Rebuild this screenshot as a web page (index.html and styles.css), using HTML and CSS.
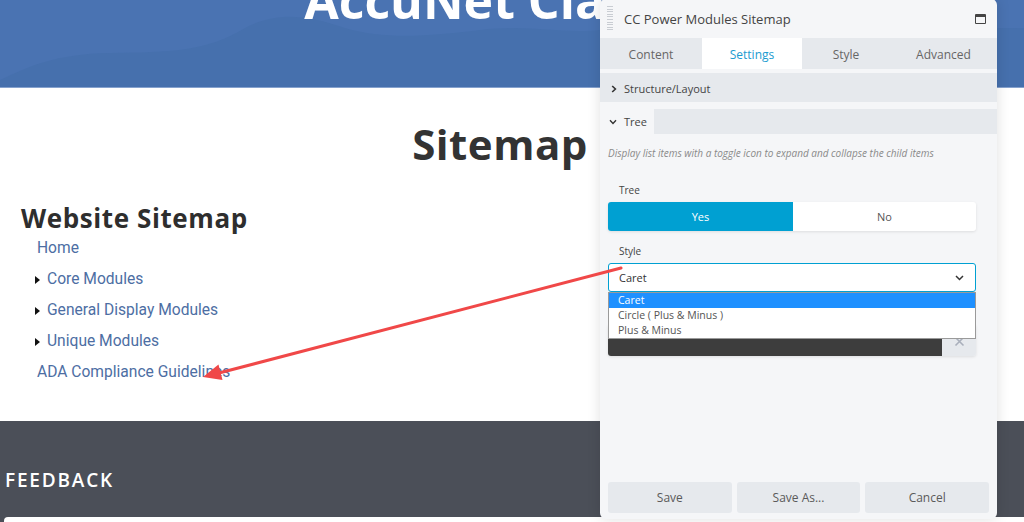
FILE: index.html
```html
<!DOCTYPE html>
<html lang="en">
<head>
<meta charset="utf-8">
<title>Sitemap</title>
<link rel="stylesheet" href="styles.css">
</head>
<body>
<div class="page">
  <header class="hero">
    <svg class="wave" viewBox="0 0 1024 87" preserveAspectRatio="none" aria-hidden="true">
      <path d="M0 80 C 30 66, 55 54, 110 53 C 170 52, 205 52, 245 28 C 275 12, 305 14, 345 28 C 385 40, 430 36, 480 30 C 530 24, 560 34, 600 30 L1024 28 L1024 0 L0 0 Z" fill="#4a73b2"/>
    </svg>
    <h1 class="hero-title">AccuNet Classic</h1>
  </header>
  <main class="content">
    <h2 class="page-title">Sitemap</h2>
    <h3 class="sm-title">Website Sitemap</h3>
    <ul class="sm-list">
      <li>Home</li>
      <li class="kid">Core Modules</li>
      <li class="kid">General Display Modules</li>
      <li class="kid">Unique Modules</li>
      <li>ADA Compliance Guidelines</li>
    </ul>
  </main>
  <footer class="foot">
    <h4 class="foot-title">FEEDBACK</h4>
    <div class="foot-box"></div>
  </footer>
</div>

<aside class="panel">
  <div class="p-head">
    <span class="grip"></span>
    <span class="p-title">CC Power Modules Sitemap</span>
    <span class="max-icon"></span>
  </div>
  <nav class="tabs">
    <span class="tab t1">Content</span>
    <span class="tab t2 active">Settings</span>
    <span class="tab t3">Style</span>
    <span class="tab t4">Advanced</span>
  </nav>
  <div class="p-body">
    <div class="sec-bar">
      <svg class="chev" width="6" height="8" viewBox="0 0 6 8"><polyline points="1.2,1 4.4,4 1.2,7" fill="none" stroke="#333" stroke-width="1.6"/></svg>
      <span>Structure/Layout</span>
    </div>
    <div class="tree-bar">
      <div class="tree-tab">
        <svg class="chev" width="8" height="6" viewBox="0 0 8 6"><polyline points="1,1.2 4,4.4 7,1.2" fill="none" stroke="#333" stroke-width="1.4"/></svg>
        <span>Tree</span>
      </div>
    </div>
    <p class="desc">Display list items with a toggle icon to expand and collapse the child items</p>
    <div class="field">
      <div class="label l-tree">Tree</div>
      <div class="toggle">
        <span class="opt yes">Yes</span>
        <span class="opt no">No</span>
      </div>
      <div class="label l-style">Style</div>
      <div class="select-wrap">
        <div class="select">
          <span>Caret</span>
          <svg width="9" height="6" viewBox="0 0 9 6"><polyline points="1,1 4.5,4.5 8,1" fill="none" stroke="#333" stroke-width="1.5"/></svg>
        </div>
        <ul class="dropdown">
          <li class="sel">Caret</li>
          <li>Circle ( Plus &amp; Minus )</li>
          <li>Plus &amp; Minus</li>
        </ul>
      </div>
      <div class="color-field">
        <span class="swatch"></span>
        <span class="clear">
          <svg width="11" height="11" viewBox="0 0 11 11"><path d="M1.5 1.5 L9.5 9.5 M9.5 1.5 L1.5 9.5" stroke="#a9afbb" stroke-width="1.6"/></svg>
        </span>
      </div>
    </div>
  </div>
  <div class="p-foot">
    <span class="btn">Save</span>
    <span class="btn">Save As...</span>
    <span class="btn">Cancel</span>
  </div>
</aside>

<svg class="arrow" viewBox="0 0 1024 522" aria-hidden="true">
  <line x1="621" y1="268" x2="219" y2="373" stroke="#f04848" stroke-width="3" stroke-linecap="round"/>
  <polygon points="203,377 222.5,380 218.5,364.5" fill="#f04848"/>
</svg>
</body>
</html>
```
FILE: styles.css
```css
* { box-sizing: border-box; }
html, body { margin: 0; padding: 0; }
body {
  width: 1024px;
  height: 522px;
  overflow: hidden;
  position: relative;
  background: #fff;
  font-family: "Open Sans", "Liberation Sans", sans-serif;
}

.page { display: flex; flex-direction: column; height: 522px; }

.hero {
  position: relative;
  flex: none;
  height: 88px;
  background: #4670ad;
  border-bottom: 1px solid #86a2ce;
  overflow: hidden;
}
.wave { position: absolute; left: 0; top: 0; width: 100%; height: 100%; }
.hero-title {
  position: relative;
  margin: -26px 0 0;
  width: 1000px;
  text-align: center;
  font: 700 50px/52px "Open Sans", sans-serif;
  color: #fff;
}

.content {
  flex: none;
  width: 1000px;
  height: 333px;
  padding-top: 31px;
}
.page-title {
  margin: 0;
  text-align: center;
  font: 700 42px/50px "Open Sans", sans-serif;
  letter-spacing: 0.5px;
  color: #333;
}
.sm-title {
  margin: 34px 0 0 21px;
  font: 700 26px/30px "Open Sans", sans-serif;
  letter-spacing: 0.6px;
  color: #2e2e2e;
}
.sm-list {
  list-style: none;
  margin: 0;
  padding: 0 0 0 37px;
  font: 400 15.6px/31px Roboto, sans-serif;
  color: #4d6ea3;
}
.sm-list .kid::before {
  content: "";
  display: inline-block;
  vertical-align: 0px;
  margin: 0 7px 0 -2px;
  border-left: 5px solid #111;
  border-top: 4px solid transparent;
  border-bottom: 4px solid transparent;
}

.foot {
  flex: 1;
  background: #4b4f58;
  padding-top: 47px;
}
.foot-title {
  margin: 0 0 0 5px;
  font: 600 19px/24px "Open Sans", sans-serif;
  letter-spacing: 1.8px;
  color: #fff;
}
.foot-box {
  margin: 25px 0 0 4px;
  height: 12px;
  background: #fff;
  border-radius: 4px 0 0 0;
}

/* Settings panel window */
.panel {
  position: absolute;
  left: 600px;
  top: -1px;
  width: 397px;
  height: 520px;
  background: #f5f6f8;
  border-radius: 6px;
  box-shadow: 0 0 14px rgba(0, 0, 0, 0.13);
  display: flex;
  flex-direction: column;
  z-index: 2;
  color: #444;
}
.p-head {
  flex: none;
  height: 39px;
  display: flex;
  align-items: center;
  padding-left: 7px;
}
.grip {
  width: 6px;
  height: 26px;
  margin-right: 11px;
  background: repeating-linear-gradient(to bottom, #c9cdd3 0 1px, transparent 1px 2.6px);
}
.p-title { font-size: 13px; color: #444; }
.max-icon {
  margin-left: auto;
  margin-right: 11px;
  width: 11px;
  height: 10px;
  border: 1.5px solid #444;
  border-top-width: 3px;
  border-radius: 1px;
}

.tabs {
  flex: none;
  height: 31px;
  display: flex;
  background: #e6e9ed;
}
.tab {
  display: flex;
  align-items: center;
  justify-content: center;
  padding-top: 2px;
  font-size: 12px;
  color: #666;
}
.t1 { width: 102px; }
.t2 { width: 100px; }
.t3 { width: 96px; padding-right: 8px; }
.t4 { width: 99px; padding-right: 8px; }
.tab.active { background: #fff; color: #1a9bd0; }

.p-body { flex: 1; padding-top: 4px; }
.sec-bar {
  height: 29px;
  background: #e6e9ed;
  display: flex;
  align-items: center;
  padding: 2px 0 0 11px;
  font-size: 11px;
  color: #444;
}
.sec-bar .chev { margin-right: 7px; }
.tree-bar {
  margin-top: 7px;
  height: 25px;
  background: #e6e9ed;
  display: flex;
}
.tree-tab {
  width: 54px;
  background: #f5f6f8;
  display: flex;
  align-items: center;
  padding-left: 9px;
  font-size: 11px;
  color: #444;
}
.tree-tab .chev { margin-right: 7px; }
.desc {
  margin: 0;
  padding: 12px 8px 0;
  font-style: italic;
  font-size: 10px;
  line-height: 14px;
  color: #8a8a8a;
}
.field { padding: 0 21px 0 8px; }
.label {
  padding-left: 11px;
  font-size: 10px;
  line-height: 14px;
  color: #444;
}
.l-tree { margin-top: 23px; margin-bottom: 5px; }
.l-style { margin-top: 13px; margin-bottom: 5px; }
.toggle {
  display: flex;
  height: 29px;
  background: #fff;
  border-radius: 3px;
  overflow: hidden;
  box-shadow: 0 1px 3px rgba(0, 0, 0, 0.1);
  font-size: 11px;
}
.opt { display: flex; align-items: center; justify-content: center; }
.yes { width: 185px; background: #00a0d2; color: #fff; }
.no { flex: 1; color: #555; }

.select-wrap { position: relative; }
.select {
  height: 29px;
  background: #fff;
  border: 1px solid #00a0d2;
  border-radius: 3px;
  display: flex;
  align-items: center;
  justify-content: space-between;
  padding: 0 11px 0 10px;
  font-size: 11px;
  color: #333;
}
.dropdown {
  position: absolute;
  left: 0;
  right: 0;
  top: 29px;
  margin: 0;
  padding: 0;
  list-style: none;
  background: #fff;
  border: 1px solid #9a9a9a;
  z-index: 2;
  font-size: 10.5px;
  line-height: 15px;
  color: #555;
}
.dropdown li { padding-left: 9px; height: 15px; }
.dropdown li.sel { background: #1e90ff; color: #fff; }

.color-field {
  margin-top: 32px;
  height: 32px;
  display: flex;
  border-radius: 3px;
  overflow: hidden;
  box-shadow: 0 1px 3px rgba(0, 0, 0, 0.1);
}
.swatch { flex: 1; background: #3d3d3d; }
.clear {
  width: 34px;
  background: #e6e9ed;
  display: flex;
  align-items: flex-end;
  justify-content: center;
  padding-bottom: 9px;
}

.p-foot {
  flex: none;
  display: flex;
  gap: 5px;
  padding: 0 8px 6px;
}
.btn {
  flex: 1;
  height: 31px;
  display: flex;
  align-items: center;
  justify-content: center;
  background: #e6e9ed;
  border-radius: 3px;
  font-size: 12px;
  color: #5a5a5a;
}

.arrow {
  position: absolute;
  left: 0;
  top: 0;
  width: 1024px;
  height: 522px;
  pointer-events: none;
  z-index: 3;
}
```
